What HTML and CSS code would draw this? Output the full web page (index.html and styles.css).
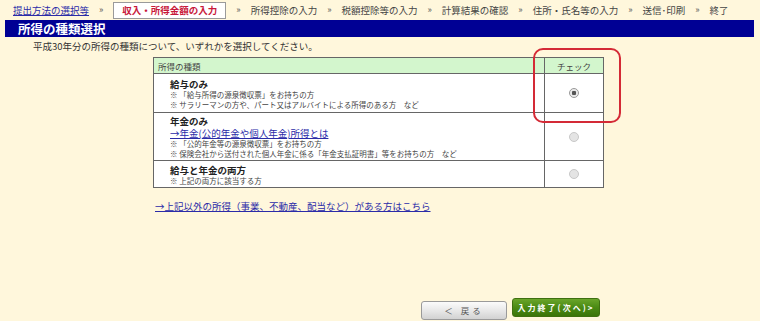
FILE: index.html
```html
<!DOCTYPE html>
<html lang="ja">
<head>
<meta charset="utf-8">
<title>所得の種類選択</title>
<link rel="stylesheet" href="styles.css">
</head>
<body>
<nav class="steps">
  <a class="step-link" href="#">提出方法の選択等</a>
  <span class="sep">»</span>
  <span class="step-current">収入・所得金額の入力</span>
  <span class="sep">»</span>
  <span class="step">所得控除の入力</span>
  <span class="sep">»</span>
  <span class="step">税額控除等の入力</span>
  <span class="sep">»</span>
  <span class="step">計算結果の確認</span>
  <span class="sep">»</span>
  <span class="step">住所・氏名等の入力</span>
  <span class="sep">»</span>
  <span class="step">送信･印刷</span>
  <span class="sep">»</span>
  <span class="step">終了</span>
</nav>
<h1 class="title-bar">所得の種類選択</h1>
<p class="lead">平成30年分の所得の種類について、いずれかを選択してください。</p>
<div class="table-wrap">
  <table class="kinds">
    <thead>
      <tr class="head"><th class="col-kind">所得の種類</th><th class="col-check">チェック</th></tr>
    </thead>
    <tbody>
      <tr class="row1">
        <td class="kind">
          <div class="kind-title">給与のみ</div>
          <div class="note">※ 「給与所得の源泉徴収票」をお持ちの方</div>
          <div class="note">※ サラリーマンの方や、パート又はアルバイトによる所得のある方　など</div>
        </td>
        <td class="check"><span class="radio checked"></span></td>
      </tr>
      <tr class="row2">
        <td class="kind">
          <div class="kind-title">年金のみ</div>
          <a class="kind-link" href="#">→年金(公的年金や個人年金)所得とは</a>
          <div class="note">※ 「公的年金等の源泉徴収票」をお持ちの方</div>
          <div class="note">※ 保険会社から送付された個人年金に係る「年金支払証明書」等をお持ちの方　など</div>
        </td>
        <td class="check"><span class="radio disabled"></span></td>
      </tr>
      <tr class="row3">
        <td class="kind">
          <div class="kind-title">給与と年金の両方</div>
          <div class="note">※ 上記の両方に該当する方</div>
        </td>
        <td class="check"><span class="radio disabled"></span></td>
      </tr>
    </tbody>
  </table>
  <div class="highlight"></div>
  <a class="other-link" href="#">→上記以外の所得（事業、不動産、配当など）がある方はこちら</a>
</div>
<div class="actions">
  <button class="btn-back" type="button">＜ 戻る</button>
  <button class="btn-next" type="button">入力終了(次へ)&gt;</button>
</div>
</body>
</html>
```
FILE: styles.css
```css
html, body {
  margin: 0;
  padding: 0;
}
body {
  background: #fff7dc;
  font-family: "Noto Sans CJK JP", "Noto Sans", sans-serif;
  font-size: 9.5px;
  color: #333;
  width: 760px;
  height: 321px;
  overflow: hidden;
}
.steps {
  display: flex;
  align-items: center;
  gap: 10px;
  height: 20px;
  padding-left: 13px;
  font-size: 9.5px;
  line-height: 12px;
  color: #444;
}
.step-link {
  color: #2b2ba8;
  text-decoration: underline;
}
.sep {
  color: #555;
  font-size: 9px;
}
.step-current {
  background: #fff;
  border: 1px solid #9a9a9a;
  color: #c8183a;
  font-weight: bold;
  padding: 1px 8px;
  line-height: 13px;
}
.title-bar {
  margin: 0 6px 0 5px;
  height: 17px;
  background: #000094;
  color: #fff;
  font-size: 12.5px;
  line-height: 17px;
  font-weight: bold;
  padding-left: 13px;
}
.lead {
  margin: 3px 0 0 33px;
  font-size: 9.5px;
  line-height: 13px;
  color: #333;
}
.table-wrap {
  position: relative;
  width: 451px;
  margin: 4px 0 0 153px;
  line-height: 10px;
}
.kinds {
  width: 451px;
  border-collapse: collapse;
  border: 1px solid #666;
  background: #fff;
  font-size: 8px;
  line-height: 10px;
}
.head { height: 16px; }
.row1 { height: 39px; }
.row2 { height: 48px; }
.row3 { height: 27px; }
.kinds th {
  background: #d3f6cd;
  font-weight: normal;
  font-size: 8.5px;
  color: #444;
  line-height: 10px;
  padding: 0;
  border: 1px solid #666;
}
.col-kind {
  text-align: left;
  padding-left: 4px !important;
}
.col-check {
  width: 58px;
  text-align: center;
}
.kinds td {
  border: 1px solid #666;
  padding: 0;
  vertical-align: top;
}
.kind {
  padding: 4px 0 0 16px !important;
}
.row2 .kind { padding-top: 2px !important; }
.row3 .kind { padding-top: 3px !important; }
.kind-title {
  font-size: 9.5px;
  font-weight: bold;
  line-height: 12px;
  color: #222;
}
.kind-link {
  display: block;
  font-size: 9.5px;
  line-height: 12px;
  color: #2b2ba8;
  text-decoration: underline;
}
.note {
  font-size: 7.5px;
  line-height: 9.5px;
  color: #444;
}
.check {
  text-align: center;
  vertical-align: middle !important;
  line-height: 0;
}
.radio {
  display: inline-block;
  width: 10px;
  height: 10px;
  border-radius: 50%;
  border: 1px solid #aaa;
  box-sizing: border-box;
  vertical-align: middle;
}
.radio.checked {
  background: radial-gradient(circle, #555 0 2px, #e6e6e6 2.5px, #f6f6f6 100%);
  border-color: #999;
}
.radio.disabled {
  background: #e4e4e4;
  border-color: #c8c8c8;
}
.highlight {
  position: absolute;
  left: 380px;
  top: -9px;
  width: 88px;
  height: 75px;
  box-sizing: border-box;
  border: 2.5px solid #d42a36;
  border-radius: 10px;
}
.other-link {
  display: inline-block;
  margin: 12px 0 0 2px;
  font-size: 9.5px;
  line-height: 12px;
  color: #2b2ba8;
  text-decoration: underline;
}
.actions {
  display: flex;
  align-items: flex-start;
  gap: 5px;
  margin: 86px 0 0 421px;
}
.btn-back {
  width: 86px;
  height: 19px;
  margin-top: 3px;
  border: 1px solid #9a9a9a;
  border-radius: 3px;
  background: linear-gradient(#fbfbfb, #e6e6e6 55%, #d2d2d2);
  font-family: inherit;
  font-size: 8.5px;
  color: #555;
  letter-spacing: 3px;
  padding: 0;
  line-height: 17px;
}
.btn-next {
  width: 88px;
  height: 19px;
  border: 1px solid #3f7010;
  border-radius: 3px;
  background: linear-gradient(#6aa52a, #4a8a14 50%, #3b7509);
  font-family: inherit;
  font-size: 8px;
  font-weight: bold;
  color: #fff;
  letter-spacing: 2px;
  padding: 0;
  line-height: 17px;
}
```
